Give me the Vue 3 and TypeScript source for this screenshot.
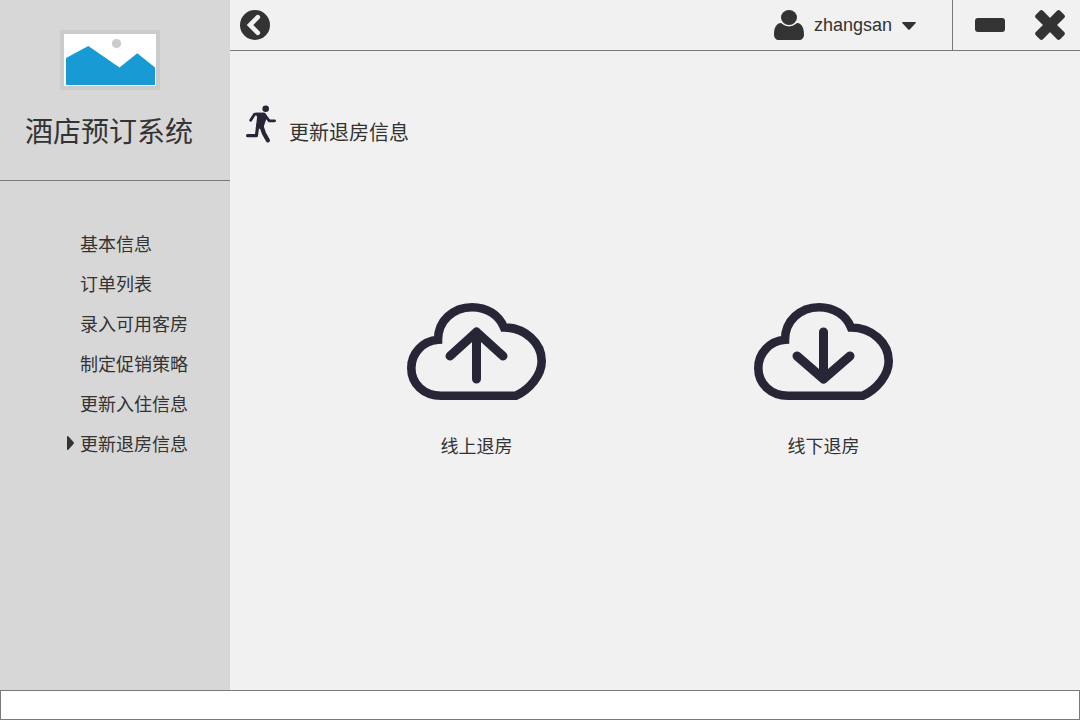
<script setup lang="ts">
import { ref } from 'vue'

interface CheckoutOption {
  label: string
  arrow: string
}

const menu: string[] = ['基本信息', '订单列表', '录入可用客房', '制定促销策略', '更新入住信息', '更新退房信息']
const current = ref<string>('更新退房信息')

const options: CheckoutOption[] = [
  { label: '线上退房', arrow: 'M69.5 77V30M43 54L69.5 30L96 54' },
  { label: '线下退房', arrow: 'M69.5 30V77M43 54L69.5 77L96 54' },
]
</script>

<template>
  <div class="app">
    <div class="body">
      <aside class="sidebar">
        <div class="brand">
          <svg class="logo" viewBox="0 0 100 60" aria-hidden="true">
            <rect width="100" height="60" fill="#cbcbcb" />
            <rect x="4" y="4" width="92" height="52" fill="#fff" />
            <circle cx="56.5" cy="13.5" r="4.6" fill="#cbcbcb" />
            <path d="M6 28L28.300 16L59.500 37.500L77.300 23.300L95 37.500V55H6Z" fill="#189bd5" />
          </svg>
          <h1 class="title">酒店预订系统</h1>
        </div>
        <nav class="menu">
          <a
            v-for="item in menu"
            :key="item"
            href="#"
            class="menu-item"
            @click.prevent="current = item"
          >
            <span class="marker">
              <svg v-if="item === current" width="7" height="14" viewBox="0 0 7 14" aria-hidden="true">
                <path d="M0 0.500Q0.500 -0.500 1.500 0.500L6.500 6Q7.300 7 6.500 8L1.500 13.500Q0.500 14.500 0 13.500Z" fill="#333" />
              </svg>
            </span>
            {{ item }}
          </a>
        </nav>
      </aside>

      <div class="content">
        <header class="topbar">
          <button class="icon-button" type="button" aria-label="返回">
            <svg width="30" height="30" viewBox="0 0 30 30">
              <circle cx="15" cy="15" r="15" fill="#333" />
              <path d="M17.800 7.200L10 15L17.800 22.800" fill="none" stroke="#f1f1f1" stroke-width="4.600" stroke-linecap="round" stroke-linejoin="miter" />
            </svg>
          </button>
          <button class="user" type="button">
            <svg width="30" height="30" viewBox="0 0 30 30" aria-hidden="true">
              <path d="M7 13C2 13.500 0 18 0 24.500C0 28 2 30 5 30H25C28 30 30 28 30 24.500C30 18 28 13.500 23 13C18.500 17 11.500 17 7 13Z" fill="#333" />
              <circle cx="15" cy="7.500" r="9" fill="#f1f1f1" />
              <ellipse cx="15" cy="7.500" rx="8" ry="7.500" fill="#333" />
            </svg>
            <span>zhangsan</span>
            <svg class="caret" width="14" height="8" viewBox="0 0 14 8" aria-hidden="true">
              <path d="M0.700 0H13.300Q14.300 0.300 13.500 1.300L8 7.300Q7 8.300 6 7.300L0.500 1.300Q-0.300 0.300 0.700 0Z" fill="#333" />
            </svg>
          </button>
          <div class="window-actions">
            <button class="icon-button" type="button" aria-label="最小化">
              <svg width="30" height="30" viewBox="0 0 30 30">
                <rect y="8" width="30" height="14" rx="3" fill="#333" />
              </svg>
            </button>
            <button class="icon-button" type="button" aria-label="关闭">
              <svg width="30" height="30" viewBox="0 0 30 30">
                <path d="M6.400 2.400L15 11L23.600 2.400L27.600 6.400L19 15L27.600 23.600L23.600 27.600L15 19L6.400 27.600L2.400 23.600L11 15L2.400 6.400Z" fill="#333" stroke="#333" stroke-width="4.400" stroke-linejoin="round" />
              </svg>
            </button>
          </div>
        </header>

        <main class="page">
          <div class="heading">
            <svg width="30" height="38" viewBox="0 0 30 38" fill="none" stroke="#272636" stroke-linecap="round" stroke-linejoin="round" aria-hidden="true">
              <circle cx="19.700" cy="3.700" r="3.300" fill="#272636" stroke="none" />
              <path d="M4.700 15.200L8.500 9.200H18L23.300 15.800H28.600" stroke-width="2.800" />
              <path d="M10.500 8.500H18.500L20.500 11.500L17.500 20L17 23H10.500L11.800 12Z" fill="#272636" stroke-width="1.400" />
              <path d="M11.800 20L10.400 30.700L1.600 30.600" stroke-width="3.200" />
              <path d="M15 20L18 28.500L21.800 35.300" stroke-width="4.200" />
            </svg>
            <h2>更新退房信息</h2>
          </div>
          <div class="options">
            <button v-for="option in options" :key="option.label" class="option" type="button">
              <svg width="140" height="98" viewBox="0 0 140 98" fill="none" stroke="#272636" aria-hidden="true">
                <path d="M34 93.700C17 93.700 4.300 82 4.300 66C4.300 51 16 39 31 37.800C31 19 46 5.200 65 5.200C80 5.200 92 13 97 25.500C118 25.500 134.700 41 134.700 59C134.700 73 123 87 109 93.700Z" stroke-width="8.600" />
                <path :d="option.arrow" stroke-width="9" stroke-linecap="round" stroke-linejoin="round" />
              </svg>
              <span>{{ option.label }}</span>
            </button>
          </div>
        </main>
      </div>
    </div>
    <footer class="statusbar"></footer>
  </div>
</template>

<style>
body {
  margin: 0;
}
</style>

<style scoped>
.app {
  display: flex;
  flex-direction: column;
  min-height: 100vh;
  background: #f1f1f1;
  color: #333;
  font-family: "Liberation Sans", "Noto Sans CJK SC", sans-serif;
  font-size: 18px;
}

.body {
  display: flex;
  flex: 1;
}

.sidebar {
  width: 230px;
  flex-shrink: 0;
  background: #d7d7d7;
}

.brand {
  box-sizing: border-box;
  height: 181px;
  padding: 30px 25px 0;
  border-bottom: 1px solid #797979;
}

.logo {
  display: block;
  width: 100px;
  margin-left: 35px;
}

.title {
  margin: 22px 0 0;
  font-size: 28px;
  font-weight: 400;
  line-height: 42px;
  white-space: nowrap;
}

.menu {
  display: flex;
  flex-direction: column;
  padding: 42px 0;
}

.menu-item {
  display: flex;
  align-items: center;
  height: 40px;
  padding-left: 67px;
  color: inherit;
  text-decoration: none;
}

.marker {
  display: flex;
  width: 13px;
}

.content {
  display: flex;
  flex: 1;
  flex-direction: column;
}

button {
  padding: 0;
  border: 0;
  background: none;
  color: inherit;
  font: inherit;
  cursor: pointer;
}

.topbar {
  display: flex;
  align-items: center;
  height: 50px;
  padding-left: 10px;
  border-bottom: 1px solid #797979;
}

.icon-button {
  display: flex;
}

.user {
  display: flex;
  align-items: center;
  gap: 10px;
  margin-left: auto;
  margin-right: 36px;
}

.caret {
  margin-top: 2px;
}

.window-actions {
  display: flex;
  align-items: center;
  gap: 30px;
  height: 50px;
  padding: 0 15px 0 22px;
  border-left: 1px solid #797979;
}

.page {
  flex: 1;
  padding: 54px 16px;
}

.heading {
  display: flex;
  align-items: flex-start;
  gap: 13px;
}

.heading h2 {
  margin: 16px 0 0;
  font-size: 20px;
  font-weight: 400;
  line-height: 24px;
}

.options {
  display: flex;
  justify-content: center;
  gap: 207px;
  margin-top: 157px;
  padding-right: 10px;
}

.option {
  display: flex;
  flex-direction: column;
  align-items: center;
  gap: 34px;
  line-height: 26px;
}

.statusbar {
  box-sizing: border-box;
  height: 30px;
  border: 1px solid #797979;
  background: #fff;
}
</style>
